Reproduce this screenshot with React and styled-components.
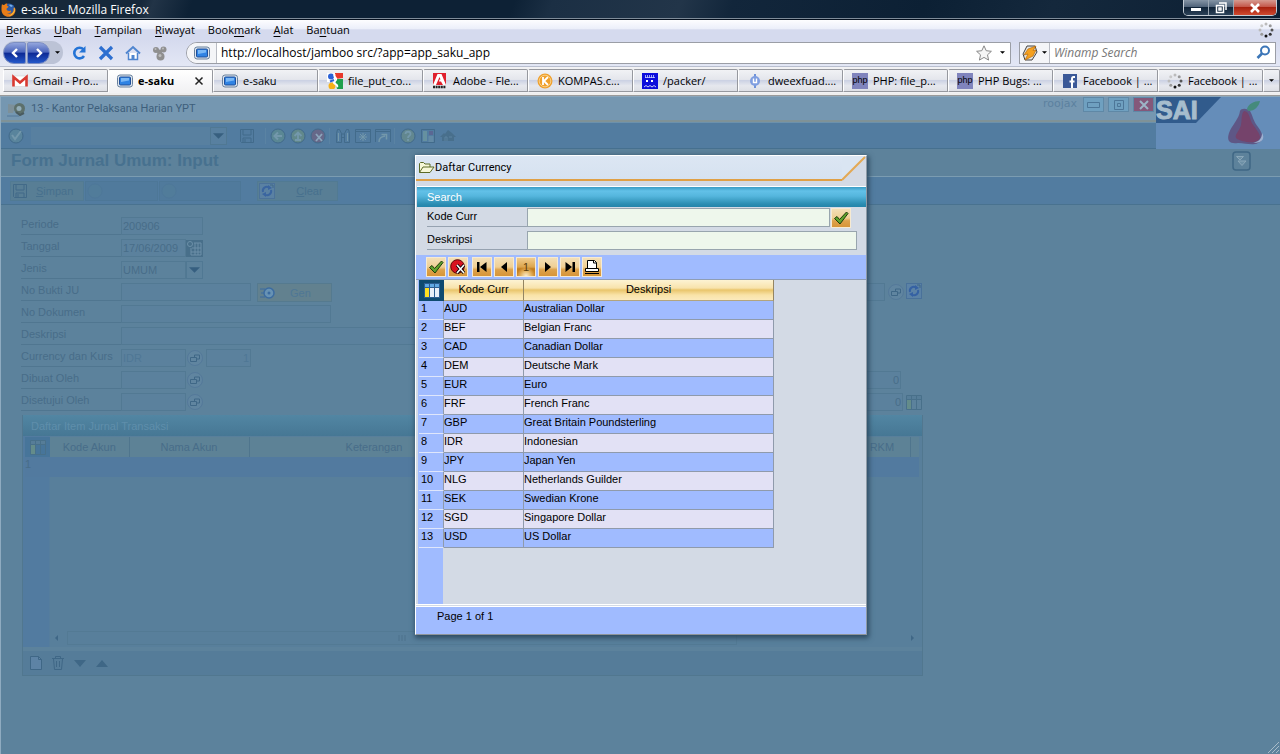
import React from "react";
import styled, { createGlobalStyle, css } from "styled-components";

const ui = `"Open Sans", "Noto Sans", sans-serif`;
const arial = `"Liberation Sans", Arial, sans-serif`;
const caption = `Roboto, "Open Sans", sans-serif`;
const ink = "#486d89";
const faint = "#4f7795";

const Global = createGlobalStyle`
  *, *::before, *::after { box-sizing: border-box; }
  html, body { margin: 0; padding: 0; }
  body { background: #5c829c; font: 11px/14px ${arial}; color: #000; }
  button, input, select { font: inherit; color: inherit; margin: 0; padding: 0; border: 0; border-radius: 0; background: none; }
  button { display: flex; align-items: center; flex: none; }
  svg { display: block; flex: none; }
  h1, h2, p { margin: 0; }
`;

const Window = styled.div`
  min-height: 100vh;
  display: flex;
  flex-direction: column;
`;

/* ---------- browser chrome ---------- */

const TitleBar = styled.header`
  height: 20px;
  display: flex;
  align-items: center;
  gap: 5px;
  padding-left: 1px;
  font: 12px/18px ${ui};
  color: #fff;
  background: linear-gradient(110deg, #16283a 0, #16283a 11%, #223447 12%, #0d2135 15%, #0d2135 40%, #1b2f44 43%, #223549 53%, #12263b 57%, #0c2034 72%, #14283c 82%, #0c1f33 100%);
  border-bottom: 1px solid #05101e;
  box-shadow: inset 0 -1px 0 #7f8c99;
`;
const WindowTitle = styled.span`flex: 1;`;
const WindowButtons = styled.div`
  display: flex;
  align-self: flex-start;
  height: 16px;
  margin-right: 3px;
  border: 1px solid #c3ccd5;
  border-top: 0;
  border-radius: 0 0 5px 5px;
  overflow: hidden;
`;
const WindowButton = styled.button`
  justify-content: center;
  width: ${(p) => (p.$close ? 42 : 25)}px;
  height: 15px;
  border-right: ${(p) => (p.$close ? 0 : "1px solid #9aa6b2")};
  background: ${(p) => (p.$close
    ? "linear-gradient(#d69a90 0, #c4574a 45%, #a8210f 50%, #cf4a30 100%)"
    : "linear-gradient(#8494a5 0, #51647a 45%, #0f2338 50%, #2c4258 100%)")};
`;

const MenuBar = styled.nav`
  height: 19px;
  display: flex;
  align-items: center;
  gap: 13px;
  padding: 0 6px;
  font: 11px/17px ${ui};
  background: linear-gradient(#fdfdff 0, #eceffa 45%, #d5daee 52%, #d5daee 100%);
`;
const MenuItem = styled.button`u { text-underline-offset: 2px; }`;
const Spacer = styled.span`flex: 1;`;

const NavBar = styled.div`
  height: 28px;
  display: flex;
  align-items: center;
  padding: 0 4px 0 3px;
  font: 12px/16px ${ui};
  background: linear-gradient(#d5daee, #e3e7f5);
  border-bottom: 1px solid #b9bfd0;
`;
const HistoryGroup = styled.div`
  display: flex;
  align-items: center;
  height: 23px;
  border-radius: 12px;
  background: #bcc3d6;
`;
const HistoryButton = styled.button`
  justify-content: center;
  width: ${(p) => (p.$menu ? 12 : 23)}px;
  height: 22px;
  ${(p) => !p.$menu && css`
    margin-right: 1px;
    border: 1px solid #7d8fc4;
    background: linear-gradient(#93a5dd 0, #4c66bd 45%, #0d2a96 52%, #2458c9 100%);
    border-radius: ${p.$back ? "11px 2px 2px 11px" : "2px 11px 11px 2px"};
  `}
`;
const NavIcons = styled.div`
  display: flex;
  gap: 11px;
  margin: 0 18px 0 8px;
`;
const Field = styled.div`
  display: flex;
  align-items: center;
  height: 22px;
  background: #fff;
  border: 1px solid #9b9ea6;
`;
const AddressField = styled(Field)`
  flex: 1;
  gap: 4px;
  padding-right: 5px;
  border-radius: 11px 0 0 11px;
  margin-right: 8px;
`;
const SearchField = styled(Field)`
  width: 257px;
  padding-right: 4px;
`;
const FieldTag = styled.span`
  display: flex;
  align-items: center;
  justify-content: center;
  gap: 4px;
  width: 30px;
  height: 20px;
  background: #f4f5f8;
  border-right: 1px solid #b9bcc4;
  border-radius: ${(p) => (p.$round ? "10px 0 0 10px" : 0)};
`;
const FieldInput = styled.input`
  flex: 1;
  min-width: 0;
  height: 18px;
  outline: 0;
  padding-left: ${(p) => (p.$indent ? 4 : 0)}px;
  &::placeholder { color: #777; font-style: italic; opacity: 1; }
`;

const TabStrip = styled.div`
  height: 29px;
  display: flex;
  align-items: flex-start;
  padding: 2px 0 0 3px;
  background: #f2f2f4;
  border-bottom: 1px solid #9a9a9a;
  box-shadow: inset 0 -2px 0 #eee;
`;
const Tab = styled.button`
  flex: 1 1 0;
  min-width: 0;
  height: ${(p) => (p.$active ? 24 : 23)}px;
  gap: 5px;
  padding: 0 8px;
  text-align: left;
  font: ${(p) => (p.$active ? "bold " : "")}11px/16px ${ui};
  border: 1px solid #96989e;
  border-left-color: #fff;
  border-bottom-color: ${(p) => (p.$active ? "#f2f2f4" : "#96989e")};
  border-radius: 2px 2px 0 0;
  background: ${(p) => (p.$active
    ? "linear-gradient(#fff, #f1f1f3)"
    : "linear-gradient(#f1f2f5 0, #e4e6ec 45%, #ccd2e4 50%, #e6e8ee 75%, #dddfe5 100%)")};
`;
const TabLabel = styled.span`flex: 1; white-space: nowrap;`;
const TabMenu = styled(Tab)`flex: 0 0 17px; justify-content: center; padding: 0;`;

/* ---------- application page ---------- */

const Page = styled.main`
  position: relative;
  flex: 1;
  display: flex;
  flex-direction: column;
  border-left: 1px solid #8fabc0;
  border-top: 1px solid #8aa6bb;
  color: ${ink};
`;
const PageTop = styled.div`display: flex;`;
const PageBars = styled.div`flex: 1; min-width: 0;`;
const AppTitle = styled.div`
  height: 25px;
  display: flex;
  align-items: center;
  padding: 0 2px 0 6px;
  gap: 4px;
  color: #3e5f7c;
  background: #7597b1;
  border-bottom: 2px solid #7f9297;
`;
const AppName = styled.h1`
  flex: 1;
  font: 11px/16px ${caption};
`;
const UserName = styled.span`
  font: 11px/14px "DejaVu Sans", sans-serif;
  color: #5c819f;
  margin-right: 2px;
  align-self: flex-start;
`;
const AppWinButton = styled.button`
  justify-content: center;
  align-self: flex-start;
  width: 21px;
  height: 15px;
  border: 1px solid #5f88a6;
  background: ${(p) => (p.$close ? "#84587a" : "#6fa0c0")};
`;
const AppToolbar = styled.div`
  height: 27px;
  display: flex;
  align-items: center;
  padding-left: 7px;
  gap: 4px;
  background: #527ca0;
  border-top: 1px solid #6c91ac;
  border-bottom: 1px solid #46708f;
  svg { opacity: 0.8; }
`;
const CommandSelect = styled.div`
  display: flex;
  align-items: center;
  width: 196px;
  height: 18px;
  margin: 0 8px 0 3px;
  background: #5880a0;
  select { flex: 1; height: 18px; appearance: none; }
`;
const ArrowCell = styled.span`
  display: flex;
  align-items: center;
  justify-content: center;
  width: 17px;
  height: 18px;
  border: 1px solid #507893;
`;
const ToolGroup = styled.div`
  display: flex;
  gap: 4px;
  padding-right: ${(p) => (p.$tight ? 3 : 6)}px;
  margin-right: ${(p) => (p.$tight ? 1 : 0)}px;
  border-right: 1px solid ${(p) => (p.$last ? "transparent" : "#5a83a3")};
`;
const Logo = styled.div`
  width: 124px;
  height: 52px;
  background: #658db9;
`;
const FormTitleBar = styled.div`
  height: 28px;
  display: flex;
  align-items: center;
  justify-content: space-between;
  padding: 0 29px 4px 10px;
  background: #5d829b;
  border-bottom: 1px solid #7b9cb1;
`;
const FormTitle = styled.h2`font: bold 17px/24px ${arial}; color: #47718f;`;
const ActionBar = styled.div`
  height: 28px;
  display: flex;
  align-items: center;
  padding: 0 9px;
  gap: 1px;
  background: #527ca0;
  border-bottom: 1px solid #49728f;
`;
const Action = styled.button`
  gap: 8px;
  width: ${(p) => p.$w}px;
  height: 20px;
  padding: 0 1px;
  margin-left: ${(p) => (p.$apart ? 15 : 0)}px;
  color: #47708d;
  border: 1px solid ${(p) => (p.$plain ? "#4d7797" : "#517a93")};
  background: ${(p) => (p.$plain ? "#507a9c" : "#587e95")};
  svg { opacity: ${(p) => (p.$plain ? 0.15 : 0.85)}; }
`;

const Form = styled.form`
  display: flex;
  flex-direction: column;
  gap: 4px;
  width: 902px;
  padding: 12px 0 0 0;
  margin-left: 20px;
`;
const FormRow = styled.div`display: flex; height: 18px; align-items: stretch;`;
const RowLabel = styled.label`
  width: 100px;
  border-bottom: 1px solid #507690;
`;
const Box = styled.input`
  width: ${(p) => p.$w}px;
  height: 18px;
  padding: 0 1px;
  text-align: ${(p) => (p.$right ? "right" : "left")};
  color: ${(p) => (p.$dim ? faint : ink)};
  border: 1px solid #527993;
  margin-left: ${(p) => (p.$gap ? 3 : 0)}px;
  background: #5b819d;
`;
const BoxSelect = styled.select`
  appearance: none;
  width: 65px;
  height: 18px;
  padding: 0 1px;
  border: 1px solid #527993;
`;
const IconButton = styled.button`
  justify-content: center;
  width: 17px;
  height: 18px;
`;
const GenButton = styled.button`
  width: 75px;
  height: 19px;
  margin-left: 6px;
  gap: 14px;
  padding-left: 2px;
  color: ${faint};
  border: 1px solid #557a8f;
  background: #62818f;
`;
const RowEnd = styled.div`
  display: flex;
  margin-left: auto;
  gap: 2px;
  padding-right: ${(p) => (p.$pad ? 22 : 1)}px;
`;

const GridPanel = styled.section`
  width: 901px;
  margin: 4px 0 0 21px;
  border: 1px solid #51778f;
  border-top: 0;
`;
const GridTitle = styled.h2`
  height: 21px;
  padding: 4px 8px;
  font: 11px/14px ${arial};
  color: #5f8eab;
  background: linear-gradient(#5286a3, #467794);
`;
const GridBody = styled.div`
  display: flex;
  flex-direction: column;
  height: 211px;
  padding: 1px 3px 0 2px;
  background: linear-gradient(90deg, #527ba0 0, #527ba0 26px, #587f9b 27px);
`;
const GridTable = styled.table`
  width: 100%;
  table-layout: fixed;
  border-collapse: collapse;
  th, td { padding: 0; height: 20px; font-weight: normal; }
  th { border-right: 1px solid #4f758d; background: #5d8296; }
  th:first-child { background: #47759a; border: 0; }
  th:last-child { border: 0; }
  td { background: #527a9f; vertical-align: top; }
`;
const CornerCell = styled.span`
  display: flex;
  align-items: center;
  justify-content: center;
  height: 20px;
`;
const ScrollRow = styled.div`
  display: flex;
  align-items: center;
  gap: 8px;
  height: 15px;
  margin: auto 4px 2px 29px;
`;
const ScrollTrack = styled.span`
  display: flex;
  align-items: center;
  justify-content: center;
  width: 670px;
  height: 14px;
  border: 1px solid #537a94;
`;
const GridFooter = styled.div`
  display: flex;
  align-items: center;
  gap: 5px;
  height: 24px;
  margin-top: 4px;
  padding-left: 4px;
  background: #557c99;
`;
const Grip = styled.span`
  display: block;
  align-self: flex-end;
  margin-top: auto;
`;

/* ---------- lookup dialog ---------- */

const Layer = styled.div`
  position: absolute;
  inset: 0;
  display: flex;
  align-items: flex-start;
  justify-content: center;
  padding: 58px 0 0 1px;
`;
const Dialog = styled.section`
  width: 452px;
  color: #000;
  background: #d3dae5;
  border: 1px solid #fff;
  border-right-color: #8e9aa6;
  border-bottom-color: #8e9499;
  box-shadow: 1px 2px 5px 1px #2d4a60;
`;
const DialogHead = styled.div`
  display: flex;
  height: 30px;
`;
const DialogTitle = styled.h2`
  flex: 1;
  display: flex;
  align-items: center;
  height: 25px;
  padding-left: 2px;
  font: 11px/16px ${caption};
  background: linear-gradient(#dce6f3, #d6e2f0);
  border-bottom: 2px solid #e0a045;
`;
const SearchTitle = styled.h2`
  height: 21px;
  padding: 3px 10px;
  font: 11px/14px ${arial};
  color: #fff;
  border-top: 1px solid #fff;
  background: linear-gradient(#3a9cc4 0, #62c1e8 20%, #55b6dd 45%, #2b8db2 85%, #2384aa 100%);
  margin-left: 1px;
`;
const SearchForm = styled.form`
  display: flex;
  flex-direction: column;
  gap: 4px;
  height: 48px;
  padding: 1px 9px 0 11px;
`;
const SearchRow = styled.div`display: flex; height: 19px; align-items: stretch;`;
const SearchLabel = styled.label`
  width: 100px;
  padding-top: 1px;
  border-bottom: 1px solid #96a2b0;
`;
const SearchInput = styled.input`
  flex: 1;
  min-width: 0;
  border: 1px solid #98a5ae;
  background: #eef7ec;
`;
const GoldButton = styled.button`
  justify-content: center;
  width: 20px;
  height: 20px;
  color: ${(p) => (p.$current ? "#5b3a08" : "#000")};
  border: 1px solid #f6ead2;
  background: ${(p) => (p.$current
    ? "radial-gradient(circle at 50% 100%, #fbeccb 0, #e5b565 25%, transparent 45%), linear-gradient(#f1cd8e 0, #dca54e 50%, #c27d1c 60%, #d08a2c 100%)"
    : "linear-gradient(#f3dfb7 0, #efcf94 50%, #dda24b 65%, #d79538 100%)")};
  margin: ${(p) => (p.$search ? "0 6px 0 1px" : "0")};
`;
const DialogTools = styled.div`
  display: flex;
  align-items: center;
  gap: 2px;
  height: 24px;
  padding-left: 10px;
  background: #a0bbff;
`;
const ToolPair = styled.div`display: flex; gap: 2px; margin-right: 2px;`;
const ListArea = styled.div`
  min-height: 326px;
  padding-left: 3px;
  border-top: 1px solid #8f9db5;
  border-bottom: 1px solid #fff;
  background: linear-gradient(90deg, #d3dae5 0, #d3dae5 2px, #a0bbff 2px, #a0bbff 27px, #d3dae5 27px);
`;
const ListTable = styled.table`
  width: 355px;
  table-layout: fixed;
  border-collapse: separate;
  border-spacing: 0;
  th, td { height: 19px; padding: 0; text-align: left; vertical-align: top; }
  thead th {
    height: 21px;
    padding-top: 2px;
    font-weight: normal;
    text-align: center;
    border-right: 1px solid #948562;
    border-bottom: 1px solid #b3a47d;
    background: linear-gradient(#fdf3d3 0, #f8e3ac 40%, #e9c56b 50%, #f9e3a8 75%, #fbeabc 100%);
  }
  thead th:first-child { padding: 0; border: 0; background: #0f4a70; }
  tbody th { font-weight: normal; padding-left: 2px; border-bottom: 1px solid #dfe6fb; border-right: 1px solid #8f9aab; }
  tbody td { border-right: 1px solid #8f9aab; border-bottom: 1px solid #8f9aab; }
  tbody tr:nth-child(odd) td { background: #a0bbff; }
  tbody tr:nth-child(even) td { background: #e2e1f5; }
`;
const DialogFoot = styled.p`
  height: 28px;
  margin-top: 1px;
  padding: 2px 21px;
  background: #a0bbff;
  border-top: 1px solid #fff;
`;

/* ---------- icons ---------- */

const Svg = ({ s = 16, w = s, h = s, vb, children }) => (
  <svg width={w} height={h} viewBox={vb || `0 0 ${w} ${h}`} fill="none" aria-hidden="true">{children}</svg>
);
const Caret = ({ c = "#000", w = 5 }) => (
  <Svg w={w} h={Math.ceil(w / 2)} vb="0 0 6 3"><path d="M0 0h6L3 3z" fill={c} /></Svg>
);
const FirefoxIcon = () => (
  <Svg s={15}>
    <circle cx="8" cy="7.5" r="6" fill="#2a5caa" />
    <path d="M8 3c2-.6 3 .3 4 1-1 0-1 1-2 1z" fill="#7db4e8" />
    <path d="M1 2c.5 1 1.500 1 2.500.8C4.500 1.500 6 1.300 6.500 2 5.500 3 5.500 4 7.500 4.500c-.5 1.500-2 1.500-2 2.500 0 2 3 2.500 4.500 1.500 1 2-2 3-4 2.500 4 2 7-1 6.500-5C14 5 14.500 6.500 14.500 8c0 4-3.500 6.800-7 6.800S.5 12 .5 8C.5 5.500.5 4 1 2z" fill="#e87d18" />
    <path d="M13.500 5c1.500 4-1 8.500-6 9 5-2 6-5 6-9z" fill="#f9cf4a" />
  </Svg>
);
const Monitor = () => (
  <Svg>
    <rect x=".5" y="2" width="15" height="12" rx="2.500" fill="#dfe6ee" stroke="#68809c" />
    <rect x="2.500" y="4" width="11" height="8" rx="1" fill="#2f83e4" stroke="#1f4f9a" />
    <path d="M4 5h8v2.500L4 9z" fill="#7ab8f6" />
  </Svg>
);
const GmailIcon = () => (
  <Svg>
    <rect x="1" y="3" width="14" height="10.500" fill="#fff" stroke="#ccc" strokeWidth=".5" />
    <path d="M1.500 13.500V4L8 9.500 14.500 4v9.500" stroke="#d93a32" strokeWidth="2.600" />
  </Svg>
);
const GoogleIcon = () => (
  <Svg>
    <path d="M8 0h8v5L8 6z" fill="#e8382b" /><path d="M8 6h8v10H10z" fill="#1f9f4d" />
    <path d="M0 0h8v9H0z" fill="#fff" />
    <circle cx="4" cy="3.500" r="3" fill="#2a62d8" /><circle cx="5" cy="13" r="3.500" fill="#f5b118" />
    <path d="M8 1c-3 3 4 4 0 7-4 3 4 3 2 6" stroke="#fff" strokeWidth="2" />
    <path d="M3 8.500l4-1.500" stroke="#2a62d8" strokeWidth="2" />
  </Svg>
);
const AdobeIcon = () => (
  <Svg>
    <rect x="1" y="0" width="13" height="12" fill="#e0202c" />
    <path d="M5.500 1h4l4.500 11h-3L9 8.500H7L7.500 6.500h1L7.500 4 4 12H1z" fill="#fff" />
    <path d="M1 14h13" stroke="#222" strokeWidth="2.500" strokeDasharray="2 .6" />
  </Svg>
);
const KompasIcon = () => (
  <Svg>
    <circle cx="8" cy="8" r="7.500" fill="#f0a02c" /><circle cx="8" cy="8" r="5.800" stroke="#f9cf85" />
    <path d="M6 4v8M11 4 7 8l4 4" stroke="#fff" strokeWidth="1.800" />
  </Svg>
);
const PackerIcon = () => (
  <Svg>
    <rect width="16" height="16" fill="#0d0ddc" />
    <path d="M3.500 2v3M5.500 2v3M7.500 2v3M9.500 2v3M11.500 2v3M3 4.500h10" stroke="#c6ceff" strokeWidth=".8" />
    <path d="M4 7h2v2H4zM9 7h2v2H9z" fill="#fff" />
    <path d="M2 14l2-1.500L6 14l2-1.500L10 14l2-1.500 2 1.500" stroke="#fff" strokeWidth=".8" />
  </Svg>
);
const DweeIcon = () => (
  <Svg><path d="M8 1v14" stroke="#6f93d9" strokeWidth="2" /><circle cx="8" cy="8" r="5" fill="#7f9ee0" /><path d="M6.500 5.500v4h3v-4" stroke="#fff" strokeWidth="1.400" /></Svg>
);
const PhpTag = styled.span`
  flex: none;
  width: 16px;
  height: 16px;
  overflow: hidden;
  font: 9px/14px ${arial};
  text-align: center;
  color: #000;
  background: #8084bd;
`;
const FacebookIcon = () => (
  <Svg><rect x="1" y="1" width="14" height="14" fill="#3b5998" /><path d="M13 4h-1.500C10.500 4 10 4.600 10 6v9M7.500 8.500h5" stroke="#fff" strokeWidth="2" /></Svg>
);
const Throbber = () => (
  <Svg>
    {[...Array(8)].map((_, i) => {
      const a = (i * Math.PI) / 4;
      return <circle key={i} cx={8 + 6 * Math.cos(a)} cy={8 + 6 * Math.sin(a)} r="1.500"
        fill={["#555", "#333", "#111", "#999", "#bbb", "#c8c8c8", "#bbb", "#999"][i]} />;
    })}
  </Svg>
);
const Chevron = ({ right }) => (
  <Svg s={12}><path d={right ? "M4 2l4 4-4 4" : "M8 2L4 6l4 4"} stroke="#fff" strokeWidth="2.400" /></Svg>
);
const Reload = () => (
  <Svg><path d="M13 11a5.300 5.300 0 1 1-.5-6.500" stroke="#2474d6" strokeWidth="2.600" /><path d="M14.500 1v6.500H8z" fill="#2474d6" /></Svg>
);
const Stop = () => <Svg><path d="M2 2l12 12M14 2 2 14" stroke="#2d6fd0" strokeWidth="3.200" /></Svg>;
const Home = () => (
  <Svg><path d="M3.500 8v6.500h9V8" fill="#fff" stroke="#4f85cf" strokeWidth="1.500" /><path d="M1 8.500 8 2l7 6.500" stroke="#4f85cf" strokeWidth="2" /><path d="M6.500 14v-4h3v4" fill="#4f85cf" /></Svg>
);
const Blobs = () => (
  <Svg><g fill="#8f8f8f"><circle cx="4" cy="5" r="3" /><circle cx="11.500" cy="4.500" r="3" /><circle cx="8.500" cy="11.500" r="4" /><circle cx="7.500" cy="7" r="2.500" /></g><g fill="#bdbdbd"><circle cx="3.500" cy="4" r="1" /><circle cx="11" cy="3.500" r="1" /><circle cx="8" cy="10.500" r="1.500" /></g></Svg>
);
const Star = () => (
  <Svg><path d="M8 .8l2.200 4.900 5.200.6-3.900 3.500 1.100 5.300L8 12.400l-4.600 2.700 1.100-5.300L.6 6.300l5.200-.6z" fill="#f5f5f5" stroke="#888" /></Svg>
);
const WinampIcon = () => (
  <Svg><path d="M5 1h8l2 6-5 8H3L1 9z" fill="#e4e4e4" stroke="#444" /><path d="M14 1 6 4 2 10l4-1-3 6 8-4 3-6-3 .5z" fill="#f5a01e" stroke="#b86a08" strokeWidth=".7" /></Svg>
);
const Magnifier = () => (
  <Svg s={15}><circle cx="9" cy="5.500" r="4" stroke="#3c76b8" strokeWidth="2" /><path d="M6 8.500 1.500 13" stroke="#3c76b8" strokeWidth="2.600" /></Svg>
);

const dk = "#3f6786";
const lt = "#7c9fae";
const AppIcon = () => (
  <Svg w={20} h={16}>
    <path d="M1 3l8 1-3 8H1z" fill="#7d9099" /><circle cx="12.500" cy="7.500" r="5.500" fill="#5d706b" />
    <circle cx="12" cy="7.500" r="2.500" fill="#93adb8" /><path d="M9 11l4 3 4-2" stroke="#4a5b5f" strokeWidth="2" /><path d="M0 15h12" stroke="#55789a" />
  </Svg>
);
const Round = ({ fill = "#5d8a92", children }) => (
  <Svg><circle cx="8" cy="8" r="7" fill={fill} stroke={dk} />{children}</Svg>
);
const CheckRound = () => <Round fill="#5b869c"><path d="M4 7l3 4 6-8" stroke={lt} strokeWidth="2" /></Round>;
const BackRound = () => <Round><path d="M12 8H5M8 4.500 4.500 8 8 11.500" stroke={lt} strokeWidth="2" /></Round>;
const UpRound = () => <Round fill="#658b86"><path d="M8 12V5M4.500 8 8 4.500 11.500 8M5 12h6" stroke={lt} strokeWidth="1.800" /></Round>;
const CancelRound = () => <Round fill="#6b6484"><path d="M6 6l6 7M12 6l-6 7" stroke="#9ab0c4" strokeWidth="1.800" /></Round>;
const HelpRound = () => <Round fill="#668a8c"><path d="M5.500 6c0-3 5-3 5 0 0 2-2.500 1.500-2.500 4M8 11v2" stroke={lt} strokeWidth="1.800" /></Round>;
const Disk = () => (
  <Svg><path d="M1.500 1.500h13v13h-12l-1-1z" stroke={dk} /><path d="M4 2v5h8V2M4 14.500V10h8v4.500M6 11v3" stroke={dk} /></Svg>
);
const Binoculars = () => (
  <Svg><path d="M1.500 14.500v-9l1-4h2l2 4v9zM9.500 14.500v-9l2-4h2l1 4v9zM6.500 6h3M6.500 9.500h3" stroke={dk} /><path d="M3.500 5v8M12.500 5v8" stroke={lt} /></Svg>
);
const StarWin = () => (
  <Svg><path d="M.5 1.500h15v13H.5zM1 3.500h14" stroke={dk} /><path d="M8 5v8M4 9h8M5 6l6 6M11 6l-6 6" stroke={lt} /></Svg>
);
const ArrowWin = () => (
  <Svg><path d="M.5 14V1.500h15V14M1 3.500h14" stroke={dk} /><path d="M4 14c0-4 2-5 6-6M6.500 6.500h5v5" stroke={lt} strokeWidth="1.500" /></Svg>
);
const ListWin = () => (
  <Svg><path d="M1.500 1.500h13v13h-13z" stroke={dk} /><path d="M3 3h4v10H3z" fill="#6b97a0" /><path d="M9 3h4v4H9z" fill="#5d6390" /><path d="M8.500 9h5M8.500 11h5M8.500 13h5" stroke={lt} /></Svg>
);
const HouseTool = () => (
  <Svg><path d="M0 9 4 5l1 1 3-4 4 3 4 4h-2v4H2V9z" fill="#466c88" /><path d="M5 13V9h2v4M9 9h3" stroke="#5f86a0" /></Svg>
);
const SwapIcon = () => (
  <Svg><rect x=".5" y=".5" width="15" height="15" fill="#5b82a6" stroke="#49719a" /><path d="M4 9a4 4 0 0 1 6-4.500M12 7a4 4 0 0 1-6 4.500" stroke="#3561a3" strokeWidth="2" /><path d="M9 2l4 3-4 2zM7 14l-4-3 4-2z" fill="#3561a3" /><path d="M11 2h3v3" stroke={dk} /></Svg>
);
const GearIcon = () => (
  <Svg><circle cx="9" cy="8" r="5" stroke="#3b6ba0" strokeWidth="1.500" fill="#6792b4" /><path d="M0 4h5M1 8h3M0 12h5" stroke="#3b6ba0" /><circle cx="9" cy="8" r="1.500" fill="#3b6ba0" /></Svg>
);
const LookupIcon = () => (
  <Svg><circle cx="8" cy="8" r="7.500" fill="#6085a0" stroke="#54799a" /><path d="M3.500 7.500h6v4h-6zM7.500 7V5h5v4h-2.500" stroke={dk} /></Svg>
);
const CalendarIcon = () => (
  <Svg w={17} h={17}><rect width="17" height="17" fill="#486f8a" /><path d="M8 3h7v12H5V8M5 12h10M9 3v12M12 3v12M6 8h9" stroke="#6c90a8" /><circle cx="4" cy="4" r="2.500" stroke="#6c90a8" /></Svg>
);
const ColumnsIcon = ({ bright }) => (
  <Svg w={16} h={15}>
    <path d="M.5.500h15v14H.5z" fill={bright ? "#e8eef8" : "none"} stroke={bright ? "#2b5d92" : "#48708a"} />
    <path d="M1 1h14v3H1z" fill={bright ? "#5fa8e4" : "#567d98"} />
    <path d="M1 4h4v10H1z" fill={bright ? "#ffdf20" : "#648c8a"} />
    <path d="M5.500 1v13M10.500 1v13M1 4.500h14" stroke={bright ? "#2b5d92" : "#48708a"} />
  </Svg>
);
const NewIcon = () => <Svg s={14}><path d="M1.500.5h8l3 3v10h-11z" fill="#5d83a5" stroke={dk} /><path d="M9.500.5v3h3" stroke={dk} /></Svg>;
const TrashIcon = () => <Svg s={14}><path d="M1 2.500h12M4.500 2V.5h5V2M2.500 3l1 10.500h7l1-10.500M5.500 5v6M8.500 5v6" stroke={dk} /></Svg>;
const LogoArt = () => (
  <svg width="124" height="52" viewBox="0 0 124 52" role="img" aria-label="SAI">
    <path d="M0 0h65L40 26H0z" fill="#315b8c" />
    <text x="0" y="22" fontFamily="Liberation Sans, Arial, sans-serif" fontSize="25" fontWeight="bold" fill="#a6bdcd" stroke="#a6bdcd">SAI</text>
    <path d="M84 14c-1 8-8 14-11 22-3 9 2 11 9 10 8 0 14 3 20 0 7-3 5-9 0-16-5-6-5-11-8-16-3-3-9-3-10 0z" fill="#5c4a79" opacity=".8" />
    <path d="M88 14c6 0 5 9 10 15 5 7 9 12 3 15-6 3-16 0-20-2-4-3 2-7 4-14 1-5 0-11 3-14z" fill="#75436b" />
    <path d="M97 46c5-1 9-4 9-10 3 5 1 10-9 10z" fill="#9db0d0" />
    <path d="M91 12c1-5 7-8 13-8-1 5-5 10-12 10z" fill="#458a7c" />
  </svg>
);

const GreenCheck = () => (
  <Svg><path d="M1.500 8.500 4 6.500l2.500 3L13.500 2l1.500 1.500L7 14z" fill="#5fa22c" stroke="#1c3d0c" /></Svg>
);
const RedCancel = () => (
  <Svg><circle cx="7.500" cy="7.500" r="6.800" fill="#d81420" stroke="#5b0508" /><path d="M7 6l7 8M14 6l-7 8" stroke="#000" strokeWidth="3.200" /><path d="M7 6l7 8M14 6l-7 8" stroke="#fff" strokeWidth="1.600" /></Svg>
);
const FirstIcon = () => <Svg s={12}><path d="M1 1h2.500v10H1zM10.500 1v10L4 6z" fill="#000" /></Svg>;
const PrevIcon = () => <Svg s={12}><path d="M9 1v10L3 6z" fill="#000" /></Svg>;
const NextIcon = () => <Svg s={12}><path d="M3 1v10l6-5z" fill="#000" /></Svg>;
const LastIcon = () => <Svg s={12}><path d="M8.500 1H11v10H8.500zM1.500 1v10L8 6z" fill="#000" /></Svg>;
const PrintIcon = () => (
  <Svg><path d="M3.500 9.500V1.500h7l2 2v6" fill="#fff" stroke="#000" /><path d="M9.500 1.500V4h3" stroke="#000" /><path d="M1.500 9.500h13v3h-13z" fill="#fff" stroke="#000" /><path d="M1 14.500h14" stroke="#000" /></Svg>
);
const FolderIcon = () => (
  <Svg w={17} h={14}><path d="M1.500 11.500V2.500l1-1h3l1.500 1.500h5V6M1.500 11.500 5 6h11l-4 5.500z" fill="#f6f7d8" stroke="#5c6a26" /></Svg>
);

/* ---------- data ---------- */

const menus = [["", "B", "erkas"], ["", "U", "bah"], ["", "T", "ampilan"], ["", "R", "iwayat"], ["Book", "m", "ark"], ["", "A", "lat"], ["Ba", "n", "tuan"]];
const tabs = [
  [<GmailIcon />, "Gmail - Pro..."], [<Monitor />, "e-saku", true], [<Monitor />, "e-saku"],
  [<GoogleIcon />, "file_put_co..."], [<AdobeIcon />, "Adobe - Fle..."], [<KompasIcon />, "KOMPAS.c..."],
  [<PackerIcon />, "/packer/"], [<DweeIcon />, "dweexfuad...."], [<PhpTag>php</PhpTag>, "PHP: file_p..."],
  [<PhpTag>php</PhpTag>, "PHP Bugs: ..."], [<FacebookIcon />, "Facebook | ..."], [<Throbber />, "Facebook | ..."],
];
const currencies = [
  ["AUD", "Australian Dollar"], ["BEF", "Belgian Franc"], ["CAD", "Canadian Dollar"], ["DEM", "Deutsche Mark"],
  ["EUR", "Euro"], ["FRF", "French Franc"], ["GBP", "Great Britain Poundsterling"], ["IDR", "Indonesian"],
  ["JPY", "Japan Yen"], ["NLG", "Netherlands Guilder"], ["SEK", "Swedian Krone"], ["SGD", "Singapore Dollar"], ["USD", "US Dollar"],
];

const Row = ({ id, label, children }) => (
  <FormRow><RowLabel htmlFor={id}>{label}</RowLabel>{children}</FormRow>
);
const Lookup = ({ name }) => <IconButton type="button" aria-label={name}><LookupIcon /></IconButton>;

function Browser() {
  return (
    <>
      <TitleBar>
        <FirefoxIcon />
        <WindowTitle>e-saku - Mozilla Firefox</WindowTitle>
        <WindowButtons>
          <WindowButton aria-label="Minimize"><Svg w={12} h={8}><path d="M1 4h10v3H1z" fill="#fff" /></Svg></WindowButton>
          <WindowButton aria-label="Restore"><Svg s={12}><path d="M4 1h7v7M1.500 3.500h7v7h-7zM4 6h2v2H4z" stroke="#fff" strokeWidth="1.500" /></Svg></WindowButton>
          <WindowButton $close aria-label="Close"><Svg w={12} h={10}><path d="M2 1l8 8M10 1 2 9" stroke="#fff" strokeWidth="2.600" /></Svg></WindowButton>
        </WindowButtons>
      </TitleBar>
      <MenuBar>
        {menus.map(([a, b, c]) => <MenuItem key={a + b + c}><span>{a}<u>{b}</u>{c}</span></MenuItem>)}
        <Spacer /><Throbber />
      </MenuBar>
      <NavBar>
        <HistoryGroup>
          <HistoryButton $back aria-label="Back"><Chevron /></HistoryButton>
          <HistoryButton aria-label="Forward"><Chevron right /></HistoryButton>
          <HistoryButton $menu aria-label="History"><Caret /></HistoryButton>
        </HistoryGroup>
        <NavIcons>
          <button aria-label="Reload"><Reload /></button>
          <button aria-label="Stop"><Stop /></button>
          <button aria-label="Home"><Home /></button>
          <button aria-label="Add-ons"><Blobs /></button>
        </NavIcons>
        <AddressField>
          <FieldTag $round><Monitor /></FieldTag>
          <FieldInput aria-label="Address" defaultValue="http://localhost/jamboo src/?app=app_saku_app" />
          <Star /><span /><Caret />
        </AddressField>
        <SearchField>
          <FieldTag><WinampIcon /><Caret /></FieldTag>
          <FieldInput $indent aria-label="Search the web" placeholder="Winamp Search" />
          <Magnifier />
        </SearchField>
      </NavBar>
      <TabStrip>
        {tabs.map(([icon, label, active], i) => (
          <Tab key={i} $active={active}>
            {icon}<TabLabel>{label}</TabLabel>
            {active && <Svg s={10}><path d="M1.500 1.500l7 7M8.500 1.500l-7 7" stroke="#222" strokeWidth="1.500" /></Svg>}
          </Tab>
        ))}
        <TabMenu aria-label="All tabs"><Caret /></TabMenu>
      </TabStrip>
    </>
  );
}

function JournalPage() {
  return (
    <>
      <PageTop>
        <PageBars>
          <AppTitle>
            <AppIcon />
            <AppName>13 - Kantor Pelaksana Harian YPT</AppName>
            <UserName>roojax</UserName>
            <AppWinButton aria-label="Minimize form"><Svg w={13} h={6}><path d="M.5.500h12v5H.5z" stroke="#4d7698" /></Svg></AppWinButton>
            <AppWinButton aria-label="Restore form"><Svg s={10}><path d="M.5.500h9v9h-9zM3.500 3.500h3v3h-3z" stroke="#4d7698" /></Svg></AppWinButton>
            <AppWinButton $close aria-label="Close form"><Svg s={10}><path d="M1 1l8 8M9 1 1 9" stroke="#9db5c6" strokeWidth="2" /></Svg></AppWinButton>
          </AppTitle>
          <AppToolbar>
            <CheckRound />
            <CommandSelect><select aria-label="Command" /><ArrowCell><Caret c="#2f5878" w={11} /></ArrowCell></CommandSelect>
            <ToolGroup><Disk /><span /></ToolGroup>
            <ToolGroup $tight><BackRound /><UpRound /><CancelRound /></ToolGroup>
            <ToolGroup $tight><Binoculars /><StarWin /><ArrowWin /></ToolGroup>
            <ToolGroup $last><HelpRound /><ListWin /><HouseTool /></ToolGroup>
          </AppToolbar>
        </PageBars>
        <Logo><LogoArt /></Logo>
      </PageTop>
      <FormTitleBar>
        <FormTitle>Form Jurnal Umum: Input</FormTitle>
        <button aria-label="Collapse">
          <Svg w={19} h={20}><rect x="1" y="1" width="17" height="18" rx="3" stroke="#3f6785" strokeWidth="1.500" /><path d="M4.500 5.500h7l-3.500 3.500zM6 10h8l-4 4.500z" fill="#6d90a6" stroke="#8aa6b8" /></Svg>
        </button>
      </FormTitleBar>
      <ActionBar>
        <Action $w={74}><Disk /><span><u>S</u>impan</span></Action>
        <Action $w={73} $plain aria-label="Ubah"><Round /></Action>
        <Action $w={82} $plain aria-label="Hapus"><Round /></Action>
        <Action $w={81} $apart><SwapIcon /><Spacer /><span><u>C</u>lear</span><Spacer /></Action>
      </ActionBar>
      <Form>
        <Row id="periode" label="Periode"><Box id="periode" $w={82} defaultValue="200906" /></Row>
        <Row id="tanggal" label="Tanggal"><Box id="tanggal" $w={65} defaultValue="17/06/2009" /><IconButton type="button" aria-label="Calendar"><CalendarIcon /></IconButton></Row>
        <Row id="jenis" label="Jenis"><BoxSelect id="jenis"><option>UMUM</option></BoxSelect><ArrowCell><Caret c="#365f80" w={11} /></ArrowCell></Row>
        <Row id="bukti" label="No Bukti JU">
          <Box id="bukti" $w={130} />
          <GenButton type="button"><GearIcon />Gen</GenButton>
          <RowEnd><Box $w={84} aria-label="Reference" /><Lookup name="Find reference" /><SwapIcon /></RowEnd>
        </Row>
        <Row id="dokumen" label="No Dokumen"><Box id="dokumen" $w={210} /></Row>
        <Row id="ket" label="Deskripsi"><Box id="ket" $w={700} /></Row>
        <Row id="curr" label="Currency dan Kurs"><Box id="curr" $w={65} $dim defaultValue="IDR" /><Lookup name="Find currency" /><Box $w={45} $gap $right $dim aria-label="Kurs" defaultValue="1" /></Row>
        <Row id="dibuat" label="Dibuat Oleh"><Box id="dibuat" $w={65} /><Lookup name="Find author" /><RowEnd $pad><Box $w={100} $right aria-label="Debet" defaultValue="0" /></RowEnd></Row>
        <Row id="setuju" label="Disetujui Oleh"><Box id="setuju" $w={65} /><Lookup name="Find approver" /><RowEnd><Box $w={101} $right aria-label="Kredit" defaultValue="0" /><IconButton type="button" aria-label="Columns"><ColumnsIcon /></IconButton></RowEnd></Row>
      </Form>
      <GridPanel>
        <GridTitle>Daftar Item Jurnal Transaksi</GridTitle>
        <GridBody>
          <GridTable>
            <colgroup><col width="25" /><col width="79" /><col width="120" /><col width="250" /><col /><col width="85" /><col width="9" /></colgroup>
            <thead><tr><th aria-label="Columns"><CornerCell><ColumnsIcon /></CornerCell></th><th>Kode Akun</th><th>Nama Akun</th><th>Keterangan</th><th /><th>Kode RKM</th><th /></tr></thead>
            <tbody><tr><td>1</td><td /><td /><td /><td /><td /><td /></tr></tbody>
          </GridTable>
          <ScrollRow>
            <Svg w={5} h={6}><path d="M4 0v6L1 3z" fill={dk} /></Svg>
            <ScrollTrack><Svg w={8} h={6}><path d="M1 0v6M4 0v6M7 0v6" stroke="#4c738c" /></Svg></ScrollTrack>
            <Spacer />
            <Svg w={5} h={6}><path d="M1 0v6l3-3z" fill={dk} /></Svg>
          </ScrollRow>
        </GridBody>
        <GridFooter>
          <IconButton aria-label="Add row"><NewIcon /></IconButton>
          <IconButton aria-label="Delete row"><TrashIcon /></IconButton>
          <IconButton aria-label="Move down"><Svg w={12} h={7}><path d="M0 0h12L6 7z" fill={dk} /></Svg></IconButton>
          <IconButton aria-label="Move up"><Svg w={12} h={7}><path d="M0 7h12L6 0z" fill={dk} /></Svg></IconButton>
        </GridFooter>
      </GridPanel>
      <Grip><Svg s={14}><path d="M2 13 13 2M6 13l7-7M10 13l3-3" stroke="#a9bbc8" /></Svg></Grip>
    </>
  );
}

function CurrencyDialog() {
  return (
    <Layer>
      <Dialog role="dialog" aria-label="Daftar Currency">
        <DialogHead>
          <DialogTitle><FolderIcon />Daftar Currency</DialogTitle>
          <Svg w={24} h={25}><path d="M0 0h23L0 24z" fill="#dae5f2" /><path d="M0 24 23 1" stroke="#e3a955" strokeWidth="2" /></Svg>
        </DialogHead>
        <SearchTitle>Search</SearchTitle>
        <SearchForm>
          <SearchRow>
            <SearchLabel htmlFor="kode">Kode Curr</SearchLabel><SearchInput id="kode" />
            <GoldButton $search type="button" aria-label="Search"><GreenCheck /></GoldButton>
          </SearchRow>
          <SearchRow><SearchLabel htmlFor="desk">Deskripsi</SearchLabel><SearchInput id="desk" /></SearchRow>
        </SearchForm>
        <DialogTools>
          <ToolPair>
            <GoldButton aria-label="OK"><GreenCheck /></GoldButton>
            <GoldButton aria-label="Cancel"><RedCancel /></GoldButton>
          </ToolPair>
          <GoldButton aria-label="First page"><FirstIcon /></GoldButton>
          <GoldButton aria-label="Previous page"><PrevIcon /></GoldButton>
          <GoldButton $current>1</GoldButton>
          <GoldButton aria-label="Next page"><NextIcon /></GoldButton>
          <GoldButton aria-label="Last page"><LastIcon /></GoldButton>
          <GoldButton aria-label="Print"><PrintIcon /></GoldButton>
        </DialogTools>
        <ListArea>
          <ListTable>
            <colgroup><col width="25" /><col width="80" /><col /></colgroup>
            <thead><tr><th aria-label="Columns"><CornerCell><ColumnsIcon bright /></CornerCell></th><th>Kode Curr</th><th>Deskripsi</th></tr></thead>
            <tbody>
              {currencies.map(([code, name], i) => (
                <tr key={code}><th scope="row">{i + 1}</th><td>{code}</td><td>{name}</td></tr>
              ))}
            </tbody>
          </ListTable>
        </ListArea>
        <DialogFoot>Page 1 of 1</DialogFoot>
      </Dialog>
    </Layer>
  );
}

export default function App() {
  return (
    <Window>
      <Global />
      <Browser />
      <Page>
        <JournalPage />
        <CurrencyDialog />
      </Page>
    </Window>
  );
}
